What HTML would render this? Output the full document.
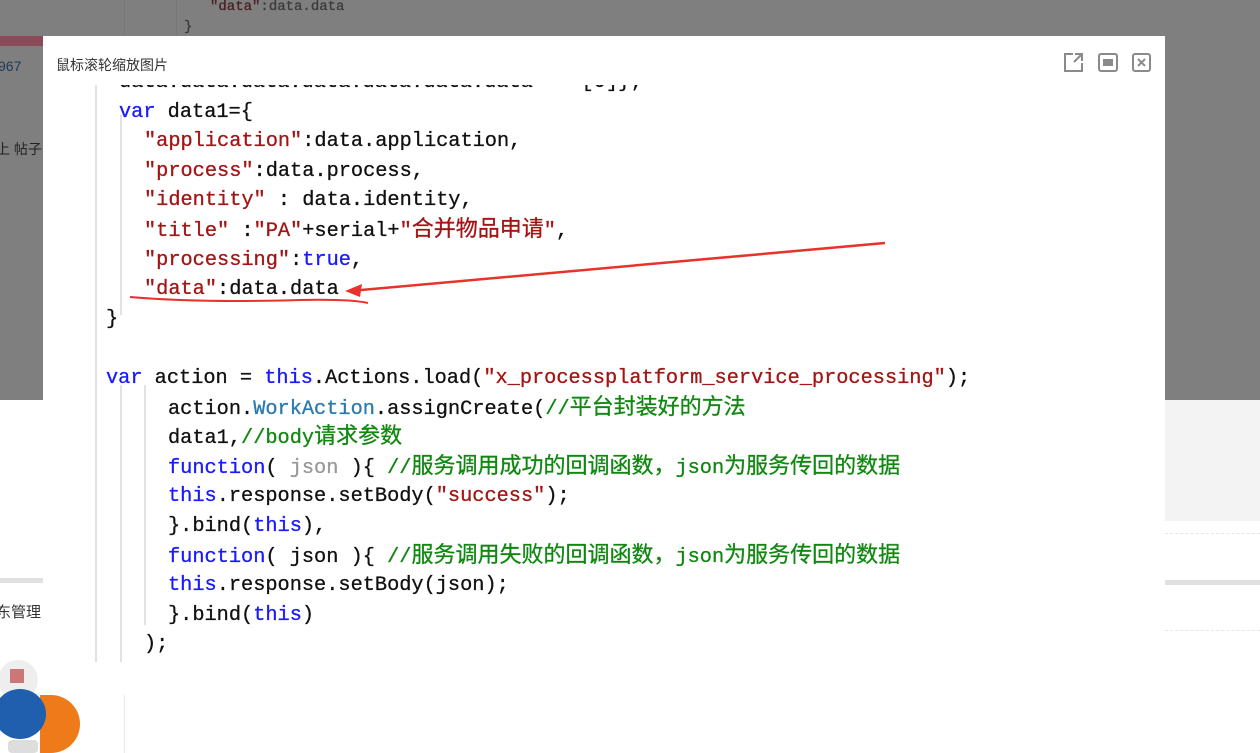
<!DOCTYPE html>
<html><head><meta charset="utf-8"><style>
body{margin:0;width:1260px;height:753px;position:relative;overflow:hidden;background:#fff;font-family:"Liberation Sans","Noto Sans CJK SC",sans-serif}
.abs{position:absolute}
.code{font-family:"Liberation Mono","Noto Sans CJK SC",monospace;font-size:20.3px;white-space:pre;color:#111;-webkit-text-stroke:0.3px currentColor}
.ln{position:absolute;height:30px;line-height:30px}
.s{color:#a31515}.k{color:#1a1aff}.c{color:#118811}.g{color:#999}
.z{font-size:22px}
.vl{position:absolute;width:2px;background:#e2e2e2}
</style></head><body>
<div class="abs" style="left:0;top:0;width:1260px;height:400px;background:#7f7f7f"></div>
<div class="abs" style="left:1165px;top:400px;width:95px;height:121px;background:#f3f3f3"></div>
<div class="abs" style="left:1165px;top:533px;width:95px;border-top:1px dashed #e6e6e6"></div>
<div class="abs" style="left:1165px;top:580px;width:95px;height:5px;background:#e0e0e0"></div>
<div class="abs" style="left:1165px;top:630px;width:95px;border-top:1px dashed #e6e6e6"></div>
<div class="abs" style="left:0;top:578px;width:43px;height:5px;background:#e0e0e0"></div>
<div class="abs" style="left:-4px;top:601px;font-size:15px;color:#333">东管理</div>
<div class="abs" style="left:124px;top:695px;width:1px;height:58px;background:#e8e8e8"></div>
<div class="abs" style="left:40px;top:695px;width:40px;height:58px;background:#ef7a1a;border-radius:0 30px 30px 0"></div>
<div class="abs" style="left:-2px;top:660px;width:40px;height:40px;background:#eee;border-radius:50%"></div>
<div class="abs" style="left:10px;top:669px;width:14px;height:14px;background:#c77"></div>
<div class="abs" style="left:-6px;top:689px;width:52px;height:50px;background:#1f5fae;border-radius:50%"></div>
<div class="abs" style="left:8px;top:740px;width:30px;height:13px;background:#ddd;border-radius:4px"></div>
<div class="abs" style="left:124px;top:0;width:1px;height:36px;background:#777"></div>
<div class="abs" style="left:176px;top:0;width:1px;height:36px;background:#777"></div>
<div class="abs code" style="left:210px;top:-4px;font-size:14px;line-height:22px;color:#3a3a3a"><span style="color:#4a2020">"data"</span>:data.data</div>
<div class="abs code" style="left:184px;top:16px;font-size:14px;line-height:22px;color:#3a3a3a">}</div>
<div class="abs" style="left:0;top:36px;width:43px;height:10px;background:#8a4a5a"></div>
<div class="abs" style="left:-2px;top:58px;font-size:14px;color:#1d3a5a">967</div>
<div class="abs" style="left:-4px;top:139px;font-size:14px;color:#222">上 帖子</div>
<div class="abs" style="left:43px;top:36px;width:1122px;height:626px;background:#fff"></div>
<div class="abs" style="left:56px;top:55px;font-size:14px;color:#333">鼠标滚轮缩放图片</div>
<svg class="abs" style="left:1060px;top:50px" width="100" height="26" viewBox="0 0 100 26">
<g fill="none" stroke="#8a8a8a" stroke-width="2">
<path d="M13 4H5v17h17v-8"/><path d="M15 4h7v7M22 4l-8 8"/>
<rect x="39" y="4" width="18" height="17" rx="2"/>
<rect x="73" y="4" width="17" height="17" rx="2"/>
<path d="M78 9l7 7M85 9l-7 7"/></g>
<rect x="43" y="9" width="10" height="7" fill="#8a8a8a"/>
</svg>
<div class="abs" style="left:43px;top:85px;width:1122px;height:577px;overflow:hidden">
<div class="vl" style="left:52px;top:0;height:577px"></div>
<div class="vl" style="left:77px;top:30px;height:200px"></div>
<div class="vl" style="left:77px;top:300px;height:277px"></div>
<div class="vl" style="left:101px;top:300px;height:240px"></div>
<div class="code" style="position:absolute;left:63px;top:-17px;width:1100px">
<div class="ln" style="top:0;left:13px">data.data.data.data.data.data.data ===[0]};</div>
<div class="ln" style="top:29.6px;left:13px"><span class="k">var</span> data1={</div>
<div class="ln" style="top:59.2px;left:38px"><span class="s">"application"</span>:data.application,</div>
<div class="ln" style="top:88.8px;left:38px"><span class="s">"process"</span>:data.process,</div>
<div class="ln" style="top:118.4px;left:38px"><span class="s">"identity"</span> : data.identity,</div>
<div class="ln" style="top:148px;left:38px"><span class="s">"title"</span> :<span class="s">"PA"</span>+serial+<span class="s">"<span class="z">合并物品申请</span>"</span>,</div>
<div class="ln" style="top:177.6px;left:38px"><span class="s">"processing"</span>:<span class="k">true</span>,</div>
<div class="ln" style="top:207.2px;left:38px"><span class="s">"data"</span>:data.data</div>
<div class="ln" style="top:236.8px;left:0">}</div>
<div class="ln" style="top:296px;left:0"><span class="k">var</span> action = <span class="k">this</span>.Actions.load(<span class="s">"x_processplatform_service_processing"</span>);</div>
<div class="ln" style="top:325.6px;left:62px">action.<span style="color:#2a7ab0">WorkAction</span>.assignCreate(<span class="c">//<span class="z">平台封装好的方法</span></span></div>
<div class="ln" style="top:355.2px;left:62px">data1,<span class="c">//body<span class="z">请求参数</span></span></div>
<div class="ln" style="top:384.8px;left:62px"><span class="k">function</span>( <span class="g">json</span> ){ <span class="c">//<span class="z">服务调用成功的回调函数，</span>json<span class="z">为服务传回的数据</span></span></div>
<div class="ln" style="top:414.4px;left:62px"><span class="k">this</span>.response.setBody(<span class="s">"success"</span>);</div>
<div class="ln" style="top:444px;left:62px">}.bind(<span class="k">this</span>),</div>
<div class="ln" style="top:473.6px;left:62px"><span class="k">function</span>( json ){ <span class="c">//<span class="z">服务调用失败的回调函数，</span>json<span class="z">为服务传回的数据</span></span></div>
<div class="ln" style="top:503.2px;left:62px"><span class="k">this</span>.response.setBody(json);</div>
<div class="ln" style="top:532.8px;left:62px">}.bind(<span class="k">this</span>)</div>
<div class="ln" style="top:562.4px;left:38px">);</div>
</div>
</div>
<svg class="abs" style="left:0;top:0" width="1260" height="753">
<path d="M885 243 L350 291" stroke="#e8332a" stroke-width="2.5" fill="none"/>
<path d="M345 291 L362 284 L360 297 Z" fill="#e8332a"/>
<path d="M130 297 Q200 303 300 300 Q350 299 368 303" stroke="#e8332a" stroke-width="2" fill="none"/>
</svg>
</body></html>
